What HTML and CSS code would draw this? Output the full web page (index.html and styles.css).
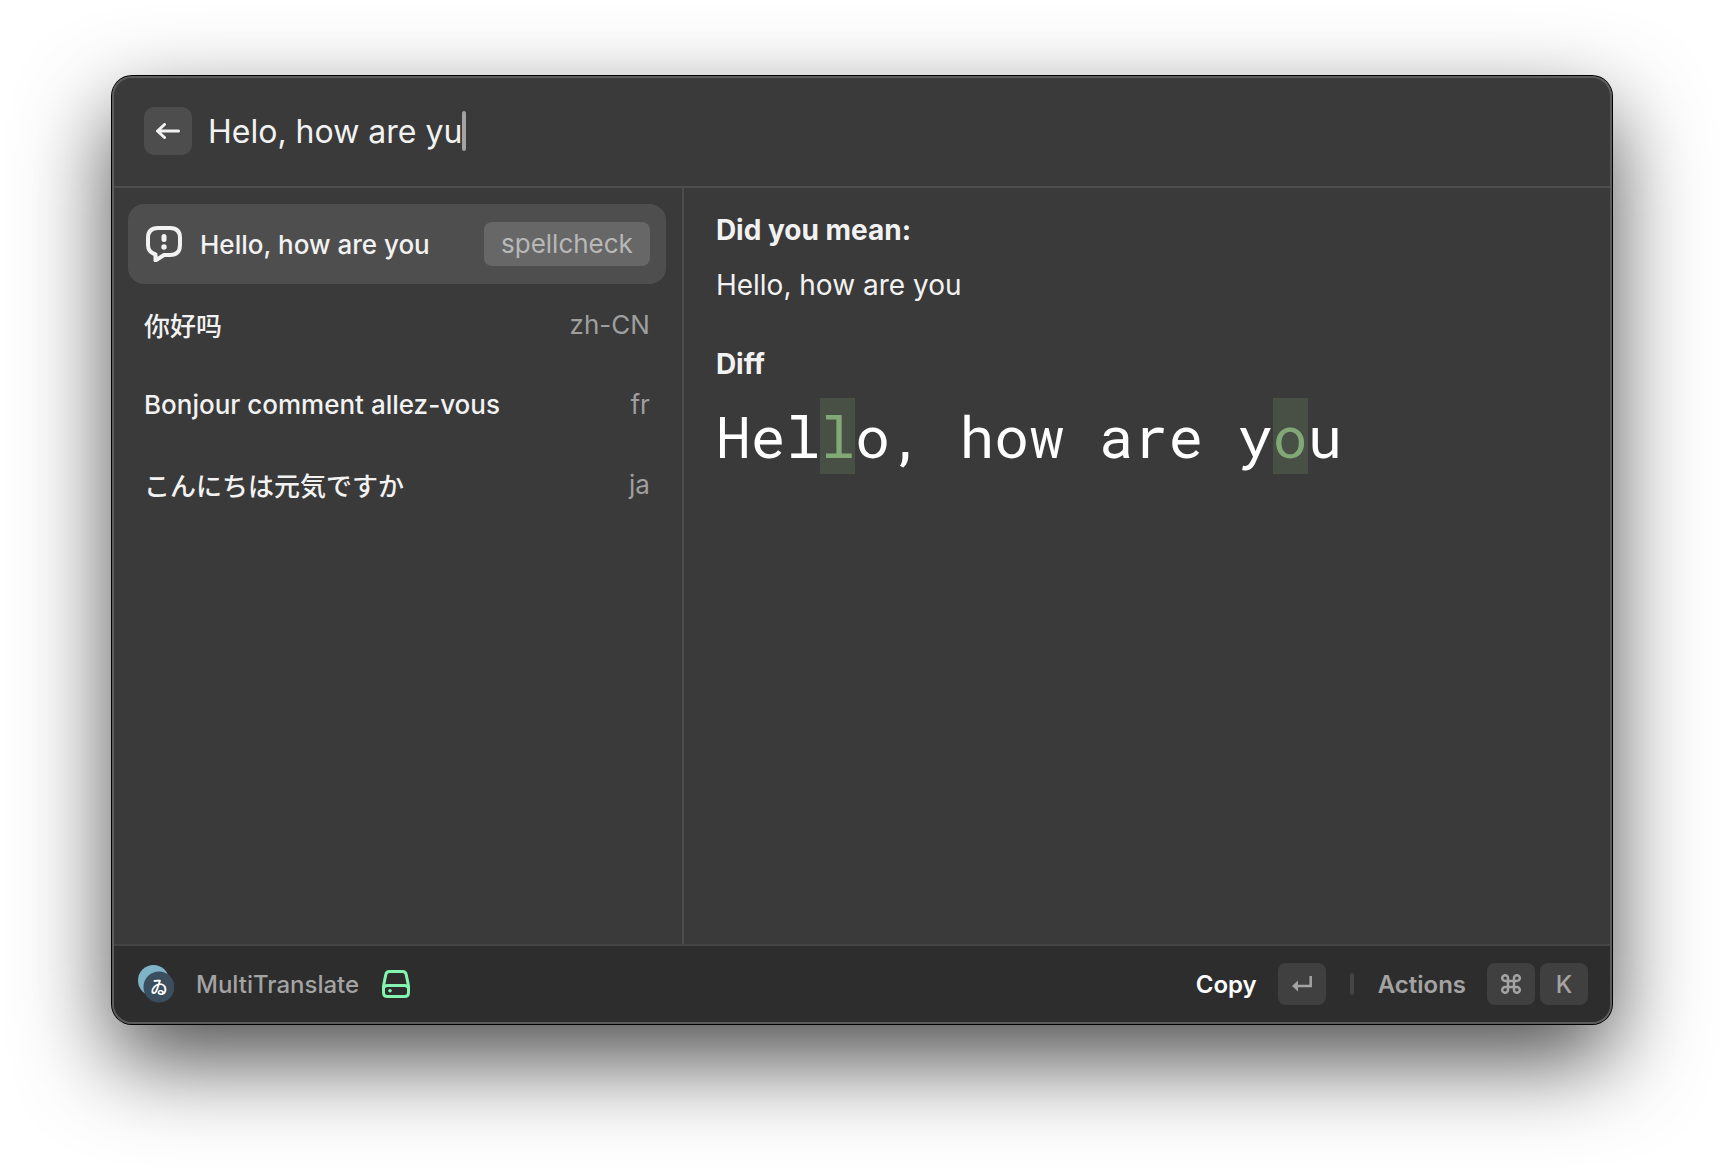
FILE: index.html
```html
<!DOCTYPE html>
<html lang="en">
<head>
  <meta charset="UTF-8">
  <meta name="viewport" content="width=device-width, initial-scale=1.0">
  <title>MultiTranslate</title>
  <link rel="stylesheet" href="styles.css">
</head>
<body>
  <div class="window">
    <header class="search-bar">
      <button class="back" type="button" aria-label="Back">
        <svg width="24" height="16" viewBox="0 0 24 16" fill="none" stroke="currentColor" stroke-width="3" stroke-linecap="round" stroke-linejoin="round">
          <path d="M22.500 8H2M8.500 1.500L1.500 8L8.500 14.500"/>
        </svg>
      </button>
      <input class="search" type="text" aria-label="Text to translate" value="Helo, how are yu" size="16" spellcheck="false">
      <span class="caret"></span>
    </header>

    <main class="content">
      <div class="results">
        <button class="result selected" type="button">
          <svg class="result-icon" width="36" height="36" viewBox="0 0 36 36" fill="none" stroke="currentColor" stroke-width="4" stroke-linejoin="round">
            <path d="M12 2H24Q34 2 34 12V19Q34 29 24 29H18L9.500 34.500V28.500Q2 26 2 19V12Q2 2 12 2Z"/>
            <rect x="15.500" y="8" width="5" height="8" rx="2.500" fill="currentColor" stroke="none"/>
            <circle cx="18" cy="21" r="2.700" fill="currentColor" stroke="none"/>
          </svg>
          <span class="result-text">Hello, how are you</span>
          <span class="tag">spellcheck</span>
        </button>
        <button class="result" type="button">
          <span class="result-text" lang="zh-CN">你好吗</span>
          <span class="lang">zh-CN</span>
        </button>
        <button class="result" type="button">
          <span class="result-text" lang="fr">Bonjour comment allez-vous</span>
          <span class="lang">fr</span>
        </button>
        <button class="result" type="button">
          <span class="result-text" lang="ja">こんにちは元気ですか</span>
          <span class="lang">ja</span>
        </button>
      </div>

      <section class="detail">
        <h2>Did you mean:</h2>
        <p>Hello, how are you</p>
        <h2>Diff</h2>
        <div class="diff">Hel<ins>l</ins>o, how are y<ins>o</ins>u</div>
      </section>
    </main>

    <footer class="footer">
      <svg class="logo" width="36" height="38" viewBox="0 0 36 38">
        <circle cx="15.500" cy="15.500" r="15.500" fill="#7fb3c8"/>
        <circle cx="21" cy="22" r="15.500" fill="#3a4e5d"/>
        <text class="logo-text" x="21" y="29" text-anchor="middle">ゐ</text>
      </svg>
      <span class="app-name">MultiTranslate</span>
      <svg class="drive" width="28" height="28" viewBox="0 0 28 28" fill="none" stroke="currentColor" stroke-width="3" stroke-linejoin="round">
        <path d="M7.500 1.500H20.500Q23.500 1.500 24.200 4.500L26.500 16V22.500Q26.500 26.500 22.500 26.500H5.500Q1.500 26.500 1.500 22.500V16L3.800 4.500Q4.500 1.500 7.500 1.500Z"/>
        <path d="M1.500 18Q2.500 15.500 5.500 15.500H22.500Q25.500 15.500 26.500 18"/>
        <circle cx="8" cy="20.800" r="1.800" fill="currentColor" stroke="none"/>
      </svg>

      <button class="action primary" type="button">
        Copy
        <kbd>
          <svg width="20" height="16" viewBox="0 0 20 16" fill="none" stroke="currentColor" stroke-width="2.500">
            <path d="M18.700 0V10H5"/>
            <path d="M6 4.500V15.500L0 10Z" fill="currentColor" stroke="none"/>
          </svg>
        </kbd>
      </button>
      <span class="separator"></span>
      <button class="action" type="button">
        Actions
        <span class="keys">
          <kbd>
            <svg width="20" height="20" viewBox="0 0 20 20" fill="none" stroke="currentColor" stroke-width="2.500">
              <path d="M7 7H13V13H7ZM7 7H4.200A2.900 2.900 0 1 1 7 4.200ZM13 7V4.200A2.900 2.900 0 1 1 15.800 7ZM13 13H15.800A2.900 2.900 0 1 1 13 15.800ZM7 13V15.800A2.900 2.900 0 1 1 4.200 13Z"/>
            </svg>
          </kbd>
          <kbd>K</kbd>
        </span>
      </button>
    </footer>
  </div>
</body>
</html>
```

FILE: styles.css
```css
* {
  box-sizing: border-box;
}

body {
  display: flex;
  min-height: 100vh;
  margin: 0;
  padding: 76px 112px 148px;
  background-color: #fff;
  color: #f2f2f2;
  font-family: Inter, "Noto Sans CJK SC", sans-serif;
  font-size: 26px;
  font-weight: 500;
}

button {
  border: none;
  background: none;
  color: inherit;
  font: inherit;
}

/* Launcher window */
.window {
  display: flex;
  flex: 1;
  flex-direction: column;
  border-radius: 20px;
  background-color: #3a3a3a;
  box-shadow: inset 0 0 0 2px #5c5c5c, 0 0 0 1px #000, 0 36px 90px rgba(0, 0, 0, 0.7);
}

/* Search */
.search-bar {
  display: flex;
  align-items: center;
  height: 112px;
  margin: 0 2px;
  padding: 0 30px;
  border-bottom: 2px solid #4d4d4d;
}

.back {
  display: flex;
  align-items: center;
  justify-content: center;
  width: 48px;
  height: 48px;
  margin-right: 16px;
  border-radius: 10px;
  background-color: #4d4d4d;
}

.search {
  field-sizing: content;
  padding: 0;
  border: none;
  outline: none;
  background: none;
  color: inherit;
  font-family: inherit;
  font-size: 32px;
  font-weight: 400;
}

.caret {
  width: 4px;
  height: 40px;
  border-radius: 2px;
  background-color: #a3a3a3;
}

/* Results and detail */
.content {
  display: grid;
  flex: 1;
  grid-template-columns: 8fr 13fr;
  margin: 0 2px;
}

.results {
  padding: 16px 16px 16px 14px;
  border-right: 2px solid #4d4d4d;
}

.result {
  display: flex;
  align-items: center;
  width: 100%;
  height: 80px;
  padding: 0 16px;
  border-radius: 16px;
  text-align: left;
}

.selected {
  background-color: #4e4e4e;
}

.result-icon {
  margin: 0 18px 0 2px;
}

.result-text {
  flex: 1;
}

.result-text:lang(ja) {
  font-family: Inter, "Noto Sans CJK JP", sans-serif;
}

.lang {
  color: #9f9f9f;
  font-weight: 400;
}

.tag {
  padding: 0 17px;
  border-radius: 8px;
  background-color: #676767;
  color: #b8b8b8;
  font-weight: 400;
  line-height: 44px;
}

.detail {
  padding: 22px 32px;
  font-size: 28px;
  font-weight: 400;
  line-height: 40px;
}

.detail h2 {
  margin: 0;
  font-size: 28px;
  font-weight: 700;
}

.detail p {
  margin: 15px 0 39px;
}

.diff {
  margin-top: 14px;
  color: #fff;
  font-family: "Roboto Mono", "Liberation Mono", monospace;
  font-size: 58px;
  line-height: 76px;
}

.diff ins {
  display: inline-block;
  background-color: #485046;
  color: #83a877;
  text-decoration: none;
}

/* Bottom bar */
.footer {
  display: flex;
  align-items: center;
  height: 78px;
  margin: 0 2px 2px;
  padding: 0 22px 0 24px;
  border-top: 2px solid #444;
  border-radius: 0 0 18px 18px;
  background-color: #2d2d2d;
  color: #a3a3a3;
  font-size: 24px;
}

.logo-text {
  fill: #fff;
  font-family: "Noto Sans CJK JP", sans-serif;
  font-size: 18px;
  font-weight: 500;
}

.app-name {
  margin: 0 23px 0 22px;
}

.drive {
  margin-right: auto;
  color: #83f5ae;
}

.action {
  display: flex;
  gap: 21px;
  align-items: center;
  padding: 0;
  font-weight: 600;
}

.primary {
  color: #fff;
}

.separator {
  width: 4px;
  height: 22px;
  margin: 0 24px;
  border-radius: 2px;
  background-color: #444;
}

.keys {
  display: flex;
  gap: 5px;
}

kbd {
  display: flex;
  align-items: center;
  justify-content: center;
  width: 48px;
  height: 42px;
  border-radius: 8px;
  background-color: #404040;
  color: #a3a3a3;
  font-family: inherit;
  font-weight: 500;
}
```
